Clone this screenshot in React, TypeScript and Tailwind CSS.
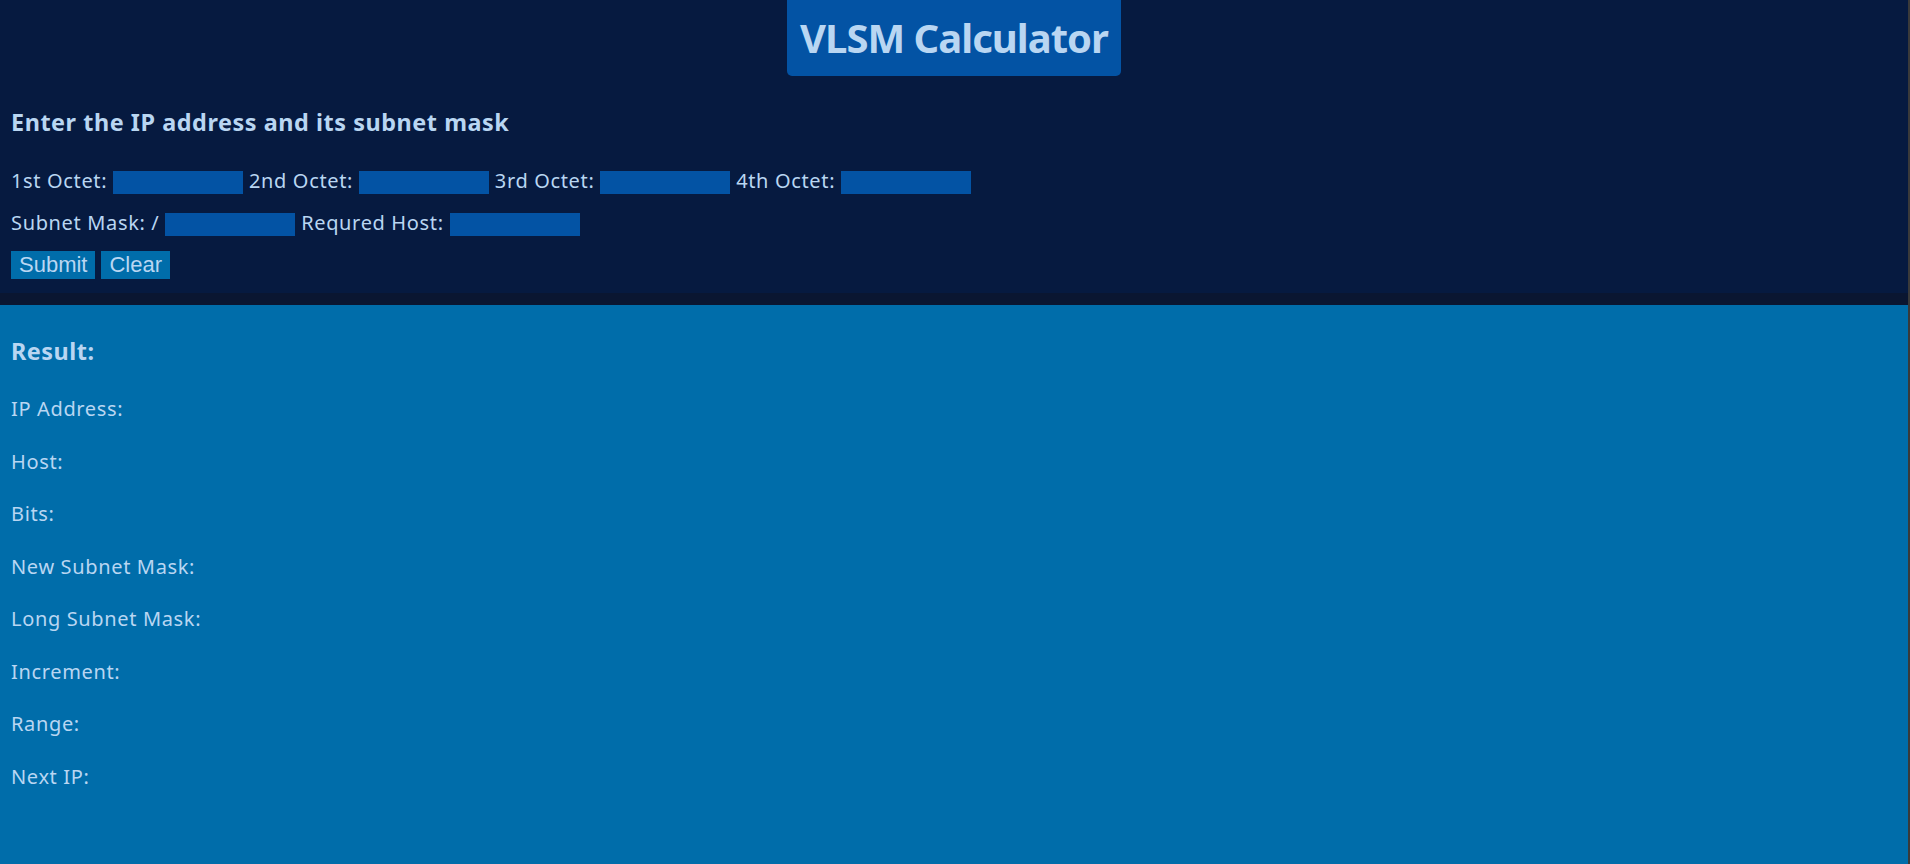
const fields = ['1st Octet:', '2nd Octet:', '3rd Octet:', '4th Octet:'];

const results = [
  'IP Address:',
  'Host:',
  'Bits:',
  'New Subnet Mask:',
  'Long Subnet Mask:',
  'Increment:',
  'Range:',
  'Next IP:',
];

function Field({ label }: { label: string }) {
  return (
    <>
      <span>{label}</span>{' '}
      <input type="text" className="w-[130px] h-[23px] bg-[#0353a4] border-0 outline-none align-middle text-[#b9d6f2] px-1" />{' '}
    </>
  );
}

export default function App() {
  return (
    <div
      className="min-h-screen bg-[#006daa] text-[#b9d6f2] text-[20px] tracking-[0.65px] border-r-2 border-[#3a3a3a]"
      style={{ fontFamily: '"Segoe UI", "Noto Sans", sans-serif' }}
    >
      {/* Input section */}
      <section className="bg-[#061a40] px-[11px] pb-[14px] border-b-[12px] border-[#0a1631]">
        <div className="flex justify-center">
          <h1 className="bg-[#0353a4] rounded-b-[5px] h-[76px] px-[13px] leading-[76px] text-[40px] font-bold tracking-[-1px]">
            VLSM Calculator
          </h1>
        </div>

        <h3 className="mt-[30px] text-[23.4px] font-bold leading-[32px] tracking-[0.55px]">
          Enter the IP address and its subnet mask
        </h3>

        <div className="mt-[29px] leading-[28px]">
          {fields.map((f) => (
            <Field key={f} label={f} />
          ))}
        </div>

        <div className="mt-[14px] leading-[28px]">
          <Field label="Subnet Mask: /" />
          <Field label="Requred Host:" />
        </div>

        <div className="mt-[14px] flex gap-[6px] tracking-normal" style={{ fontFamily: '"Liberation Sans", Arial, sans-serif' }}>
          <button className="bg-[#006daa] h-[28px] px-[8px] text-[22px] leading-[28px]">Submit</button>
          <button className="bg-[#006daa] h-[28px] px-[8px] text-[22px] leading-[28px]">Clear</button>
        </div>
      </section>

      {/* Result section */}
      <section className="px-[11px] pt-[30px] pb-[60px]">
        <h3 className="text-[23.4px] font-bold leading-[32px] tracking-[0.5px]">Result:</h3>
        <div className="mt-[28px]">
          {results.map((r) => (
            <p key={r} className="h-[52.5px] leading-[28px]">
              {r}
            </p>
          ))}
        </div>
      </section>
    </div>
  );
}
